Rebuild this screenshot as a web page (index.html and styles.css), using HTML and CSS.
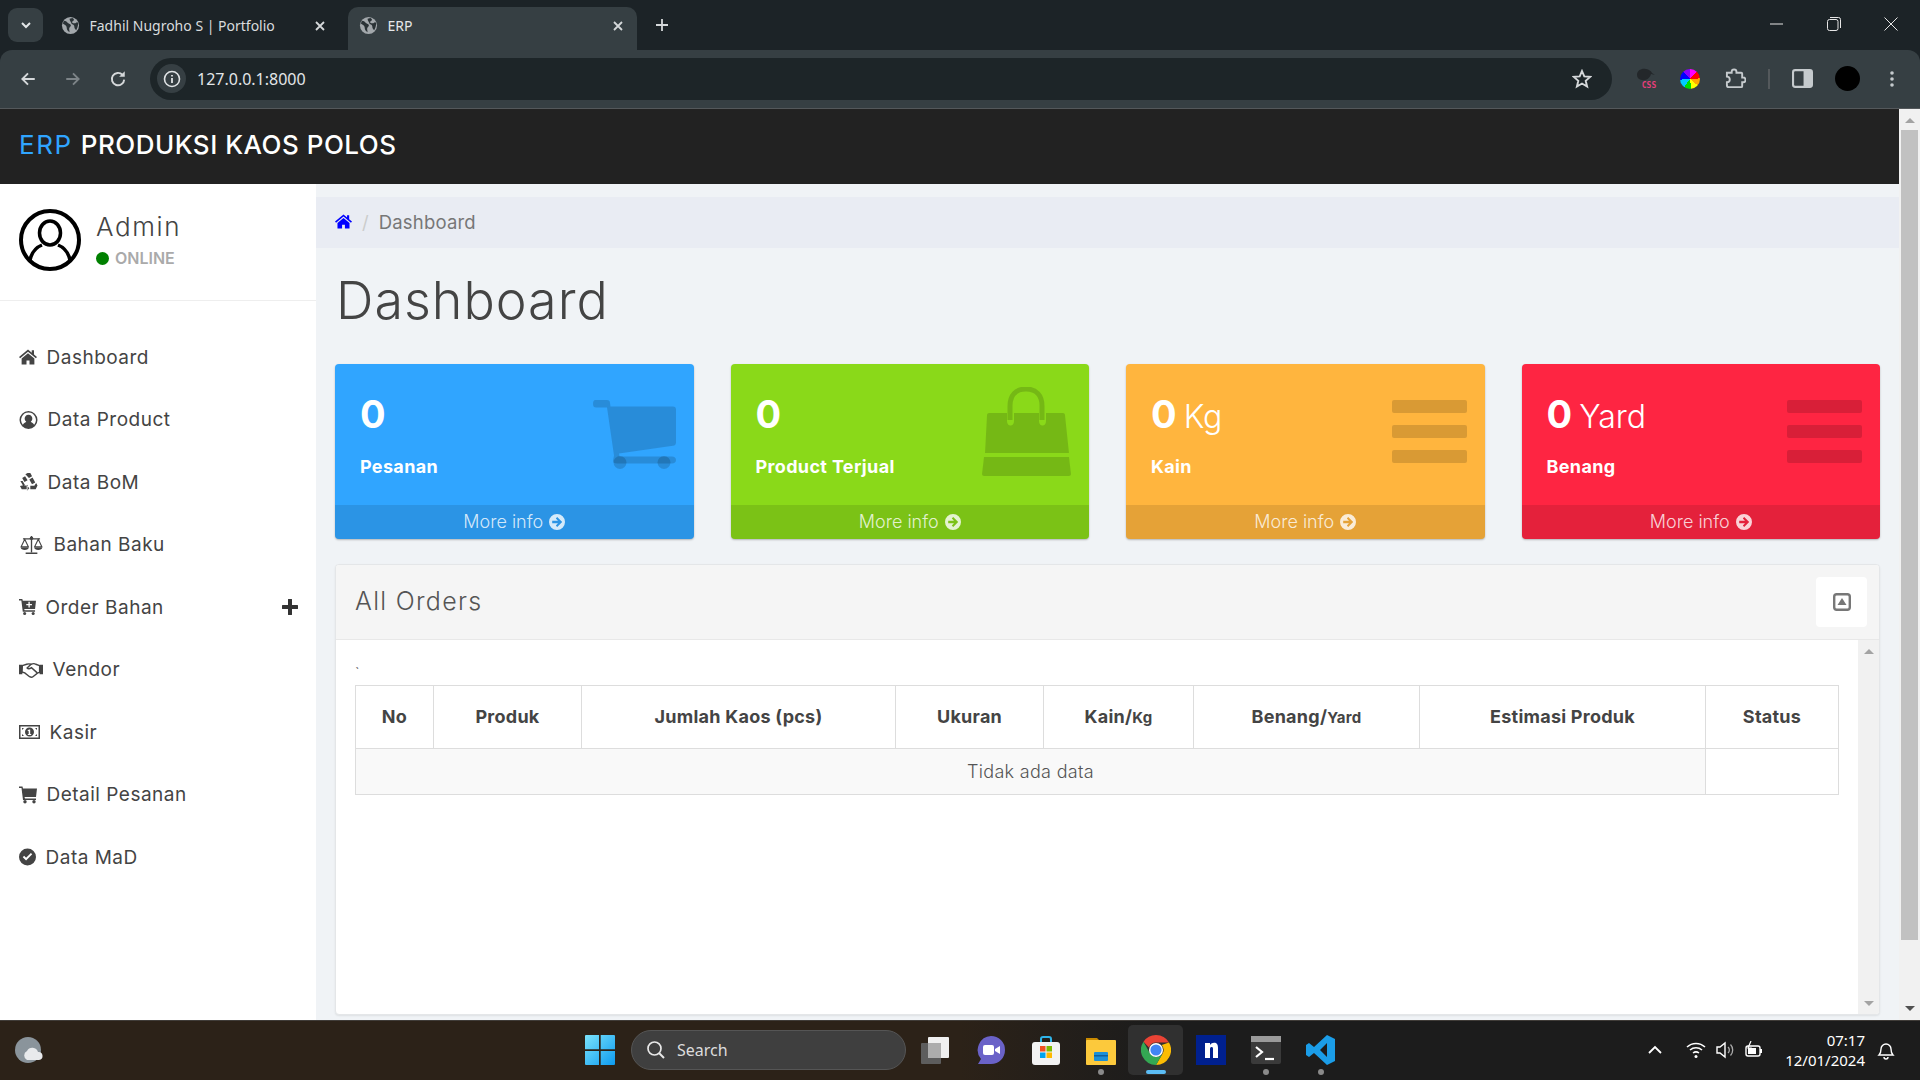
FILE: index.html
```html
<!DOCTYPE html>
<html lang="id">
<head>
<meta charset="utf-8">
<title>ERP</title>
<link rel="stylesheet" href="styles.css">
</head>
<body>
<svg class="defs" width="0" height="0" aria-hidden="true">
  <defs>
    <symbol id="globe" viewBox="0 0 20 20"><circle cx="10" cy="10" r="9" fill="#a3a8ac"/><path d="M3 5c2 0 3 1 4 2s2 1 3 2 0 2-1 3 0 3 0 5c-2-1-3-3-3-5S3 9 2 8zM12 2c2 1 2 2 1 3s-2 1-1 2 3 1 4 0 2 0 2 1c0 3-1 5-2 7-1-1-2-2-2-4s-3-2-3-3-2-3-2-5z" fill="#2a3236"/></symbol>
    <symbol id="arrow-circle" viewBox="0 0 16 16"><path fill-rule="evenodd" d="M8 0a8 8 0 1 1 0 16A8 8 0 0 1 8 0zM8.2 3 6.8 4.4 9 6.7H3.2v2.6H9l-2.2 2.3L8.2 13l5-5z"/></symbol>
    <symbol id="bars" viewBox="0 0 75 63"><rect width="75" height="13" rx="2"/><rect y="25" width="75" height="13" rx="2"/><rect y="50" width="75" height="13" rx="2"/></symbol>
  </defs>
</svg>

<header class="browser">
  <div class="tabstrip">
    <div class="tab-search"><svg width="14" height="14" viewBox="0 0 14 14"><path d="M3 5l4 4 4-4" fill="none" stroke="#e3e6e8" stroke-width="2"/></svg></div>
    <div class="tab tab-first">
      <svg class="favicon"><use href="#globe"/></svg>
      <span class="tab-title">Fadhil Nugroho S | Portfolio</span>
      <svg class="tab-x" viewBox="0 0 12 12"><path d="M2 2l8 8M10 2l-8 8" stroke="#d5d8da" stroke-width="1.8"/></svg>
    </div>
    <div class="tab tab-active">
      <svg class="favicon"><use href="#globe"/></svg>
      <span class="tab-title">ERP</span>
      <svg class="tab-x" viewBox="0 0 12 12"><path d="M2 2l8 8M10 2l-8 8" stroke="#d5d8da" stroke-width="1.8"/></svg>
    </div>
    <svg class="tab-new" viewBox="0 0 14 14"><path d="M7 1v12M1 7h12" stroke="#d5d8da" stroke-width="1.8"/></svg>
    <div class="win-controls">
      <svg viewBox="0 0 14 14"><path d="M0 7h13" stroke="#e6e6e6"/></svg>
      <svg viewBox="0 0 14 14"><rect x=".5" y="2.5" width="10.5" height="11" rx="2" fill="none" stroke="#e6e6e6"/><path d="M3 .5h8.5a2 2 0 0 1 2 2V11" fill="none" stroke="#e6e6e6"/></svg>
      <svg viewBox="0 0 14 14"><path d="M.5.5l13 13M13.5.5l-13 13" stroke="#e6e6e6"/></svg>
    </div>
  </div>
  <div class="toolbar">
    <svg class="nav" viewBox="0 0 16 16"><path d="M14 8H3M8 3L3 8l5 5" fill="none" stroke="#d5d8da" stroke-width="1.7"/></svg>
    <svg class="nav" viewBox="0 0 16 16"><path d="M2 8h11M8 3l5 5-5 5" fill="none" stroke="#7d8488" stroke-width="1.7"/></svg>
    <svg class="nav" viewBox="0 0 16 16"><path d="M13.5 8.5A5.5 5.5 0 1 1 12 4.3" fill="none" stroke="#d5d8da" stroke-width="1.7"/><path d="M14 1v5H9z" fill="#d5d8da"/></svg>
    <div class="address">
      <span class="site-info"><svg width="18" height="18" viewBox="0 0 18 18"><circle cx="9" cy="9" r="7.5" fill="none" stroke="#e0e3e5" stroke-width="1.6"/><path d="M9 8v5M9 5v1.6" stroke="#e0e3e5" stroke-width="1.8"/></svg></span>
      <span class="url">127.0.0.1:8000</span>
      <svg class="star" viewBox="0 0 20 20"><path d="M10 2l2.3 5.4 5.9.5-4.5 3.9 1.4 5.7-5.1-3-5.1 3 1.4-5.7L1.800 7.900l5.900-.5z" fill="none" stroke="#d5d8da" stroke-width="1.9"/></svg>
    </div>
    <div class="ext-group">
      <span class="ext-kiwi"><svg width="20" height="16" viewBox="0 0 20 16"><path d="M1 8c0-5 5-7 9-6 3 .5 5 2 6 4l3 2-4-1c-1 4-5 7-9 6-3-.5-5-2-5-5z" fill="#23272a"/></svg><span class="css-label">CSS</span></span>
      <span class="ext-wheel"></span>
      <svg class="ext-icon" viewBox="0 0 22 22"><path d="M2 5h5V4a2.500 2.500 0 0 1 5 0v1h5a1 1 0 0 1 1 1v4h1a2.500 2.500 0 0 1 0 5h-1v4a1 1 0 0 1-1 1H4a2 2 0 0 1-2-2v-3a3 3 0 0 0 0-6z" fill="none" stroke="#c5cacd" stroke-width="2"/></svg>
      <span class="ext-divider"></span>
      <svg class="ext-icon" viewBox="0 0 20 20"><rect x="1" y="2" width="18" height="16" rx="2" fill="none" stroke="#c5cacd" stroke-width="2"/><rect x="11" y="2" width="8" height="16" fill="#c5cacd"/></svg>
      <span class="avatar-dot"></span>
      <svg class="ext-menu" viewBox="0 0 4 16"><circle cx="2" cy="2" r="1.800"/><circle cx="2" cy="8" r="1.800"/><circle cx="2" cy="14" r="1.800"/></svg>
    </div>
  </div>
</header>

<div class="viewport">
  <div class="app">
    <div class="app-header"><span class="brand-erp">ERP</span> PRODUKSI KAOS POLOS</div>
    <div class="app-body">
      <aside class="sidebar">
        <div class="profile">
          <svg class="profile-pic" viewBox="0 0 62 62"><circle cx="31" cy="31" r="29" fill="#fff" stroke="#000" stroke-width="4"/><ellipse cx="31" cy="24" rx="10.500" ry="12" fill="none" stroke="#000" stroke-width="3.500"/><path d="M11 51c2-9 7-13 12-15M51 51c-2-9-7-13-12-15" fill="none" stroke="#000" stroke-width="3.500"/></svg>
          <div class="profile-text">
            <div class="profile-name">Admin</div>
            <div class="profile-status"><span class="status-dot"></span>ONLINE</div>
          </div>
        </div>
        <nav class="menu">
          <a class="menu-item"><svg class="mi mi-18" viewBox="0 0 24 20"><path d="M12 0 0 10l1.500 1.700L12 3l10.500 8.700L24 10l-4-3.300V1h-3v3.200zM12 5 3.500 12v8H10v-5.500h4V20h6.500v-8z"/></svg>Dashboard</a>
          <a class="menu-item"><svg class="mi mi-19" viewBox="0 0 20 20"><path fill-rule="evenodd" d="M10 0a10 10 0 1 1 0 20 10 10 0 0 1 0-20zm0 1.800a8.200 8.200 0 0 0-6.300 13.400C5 13.300 6.800 12.500 7.500 12a4.300 4.300 0 1 1 5 0c.7.500 2.500 1.300 3.800 3.200A8.200 8.200 0 0 0 10 1.800z"/></svg>Data Product</a>
          <a class="menu-item"><svg class="mi mi-19" viewBox="0 0 20 20"><path d="M6.500 1.500 9 0h3l2 3.500-3.500 2zM14.500 5l3 5.500-3.600 1.900-3-5.300zM6.200 3.500 9 8 5.500 10 3 5.500zM1 9l3.200 5.500L6 13.400 3.500 9zM.500 14.500 2.500 18H8v-4H3zM9 13v5l-1 2 3-3-3-3zM18.500 11l1.500 3-2 4h-6v-3.800h4.500z"/></svg>Data BoM</a>
          <a class="menu-item"><svg class="mi mi-25" viewBox="0 0 25 20"><path d="M12.500 0v18M6 19.200h13M3 3.200h19" fill="none" stroke="currentColor" stroke-width="1.500"/><circle cx="12.500" cy="2.500" r="2"/><path d="M5 3.500 1 12h8zM20 3.500 16 12h8z" fill="none" stroke="currentColor" stroke-width="1.200"/><path d="M.500 12.500h9c0 2-2 3-4.500 3s-4.500-1-4.500-3zM15.500 12.500h9c0 2-2 3-4.500 3s-4.500-1-4.500-3z"/></svg>Bahan Baku</a>
          <a class="menu-item menu-item-sub"><svg class="mi mi-17" viewBox="0 0 18 17"><path fill-rule="evenodd" d="M0 0h3.500l.5 2h14l-1 8.500H5.500L6 12h11v1.500H4L2.500 1.500H0zM10 3v2.300H7.700v1.400H10V9h1.400V6.700h2.300V5.300h-2.300V3z"/><circle cx="6" cy="15.300" r="1.600"/><circle cx="15" cy="15.300" r="1.600"/></svg>Order Bahan<svg class="menu-plus" viewBox="0 0 16 16"><path d="M8 1v14M1 8h14" stroke="currentColor" stroke-width="4" stroke-linecap="round"/></svg></a>
          <a class="menu-item"><svg class="mi mi-24" viewBox="0 0 25 16"><path d="M0 2.500h3.500v10H0zM21.500 2.500H25v10h-3.500z"/><path d="M3.500 3.500 8 2c2-.7 3-.5 4.500 0 2-.8 3.500-1 5 0l4 1.500v7l-2 .5-5 4c-1 .8-2.500.5-3.500 0l-5-4-3-1z" fill="none" stroke="currentColor" stroke-width="1.500"/><path d="M12.500 2 8.500 6c1.500 1.500 3 .5 4.500-.5l6 5.500" fill="none" stroke="currentColor" stroke-width="1.500"/></svg>Vendor</a>
          <a class="menu-item"><svg class="mi mi-21" viewBox="0 0 21 14"><path fill-rule="evenodd" d="M0 0h21v14H0zm1.500 1.500v11h18v-11zM3 3h2L3 5zM18 3v2l-2-2zM3 11V9l2 2zM16 11l2-2v2z"/><path fill-rule="evenodd" d="M10.500 2.500a4.500 4.500 0 1 1 0 9 4.500 4.500 0 0 1 0-9zM10 4.500 8.500 5.500l.5.800.7-.4V9H8.800v1h3.400V9h-1V4.500z"/></svg>Kasir</a>
          <a class="menu-item"><svg class="mi mi-18" viewBox="0 0 18 17"><path d="M0 0h3.500l.5 2h14l-1 8.500H5.500L6 12h11v1.500H4L2.500 1.500H0z"/><circle cx="6" cy="15.300" r="1.700"/><circle cx="15" cy="15.300" r="1.700"/></svg>Detail Pesanan</a>
          <a class="menu-item"><svg class="mi mi-17" viewBox="0 0 18 18"><path fill-rule="evenodd" d="M9 0a9 9 0 1 1 0 18A9 9 0 0 1 9 0zm5 6.200L12.600 4.800 7.500 9.900 5.400 7.800 4 9.200l3.500 3.500z"/></svg>Data MaD</a>
        </nav>
      </aside>

      <main class="content">
        <div class="breadcrumb">
          <svg class="crumb-home" viewBox="0 0 24 20"><path d="M12 0 0 10l1.500 1.700L12 3l10.500 8.700L24 10l-4-3.300V1h-3v3.200zM12 5 3.500 12v8H10v-5.500h4V20h6.500v-8z"/></svg>
          <span class="crumb-sep">/</span>
          <span class="crumb-current">Dashboard</span>
        </div>
        <div class="page">
          <h1 class="page-title">Dashboard</h1>
          <section class="cards">
            <article class="card card-blue">
              <div class="card-body">
                <div class="card-text">
                  <div class="card-num">0</div>
                  <div class="card-label">Pesanan</div>
                </div>
                <svg class="card-icon icon-cart" viewBox="0 0 83 69"><path d="M2 0h12c2 0 3 1 3 3l.5 3.500H80c2 0 3 1 3 3v33c0 2-1 3-3 3.300l-54 7.700.5 3H79c2.500 0 4 1.500 4 3.500s-1.500 3.500-4 3.500H24c-3 0-4-1-4-3l1-5-7-48H3c-2 0-3-1-3-3.500C0 1 1 0 2 0z"/><ellipse cx="27" cy="62.500" rx="6.500" ry="6.500"/><ellipse cx="71" cy="62.500" rx="6.500" ry="6.500"/></svg>
              </div>
              <a class="card-foot">More info <svg class="foot-icon"><use href="#arrow-circle"/></svg></a>
            </article>
            <article class="card card-green">
              <div class="card-body">
                <div class="card-text">
                  <div class="card-num">0</div>
                  <div class="card-label">Product Terjual</div>
                </div>
                <svg class="card-icon icon-bag" viewBox="0 0 89 89"><path d="M7 26h18v8c0 6 7 6 7 0v-8h25v8c0 6 7 6 7 0v-8h17c1 0 2 .8 2 2l4 38H3L5 28c0-1.200 1-2 2-2z"/><path d="M2 70h85l2 17c0 1-1 2-2 2H2c-1 0-2-1-2-2z"/><path d="M28 33V19C28 8 34 2 44 2s16 6 16 17v14" fill="none" stroke="currentColor" stroke-width="5"/></svg>
              </div>
              <a class="card-foot">More info <svg class="foot-icon"><use href="#arrow-circle"/></svg></a>
            </article>
            <article class="card card-orange">
              <div class="card-body">
                <div class="card-text">
                  <div class="card-num">0 <span class="card-unit">Kg</span></div>
                  <div class="card-label">Kain</div>
                </div>
                <svg class="card-icon icon-bars"><use href="#bars"/></svg>
              </div>
              <a class="card-foot">More info <svg class="foot-icon"><use href="#arrow-circle"/></svg></a>
            </article>
            <article class="card card-red">
              <div class="card-body">
                <div class="card-text">
                  <div class="card-num">0 <span class="card-unit">Yard</span></div>
                  <div class="card-label">Benang</div>
                </div>
                <svg class="card-icon icon-bars"><use href="#bars"/></svg>
              </div>
              <a class="card-foot">More info <svg class="foot-icon"><use href="#arrow-circle"/></svg></a>
            </article>
          </section>

          <section class="panel">
            <div class="panel-head">
              <span class="panel-title">All Orders</span>
              <button class="panel-btn"><svg width="18" height="18" viewBox="0 0 18 18"><rect x="1.200" y="1.200" width="15.600" height="15.600" rx="2.500" fill="none" stroke="#777" stroke-width="2.400"/><path d="M9 5l4.500 7h-9z" fill="#777"/></svg></button>
            </div>
            <div class="panel-main">
              <div class="panel-inner">
                <div class="tick">`</div>
                <table class="orders">
                  <colgroup>
                    <col class="c1"><col class="c2"><col class="c3"><col class="c4"><col class="c5"><col class="c6"><col class="c7"><col class="c8">
                  </colgroup>
                  <thead>
                    <tr>
                      <th>No</th><th>Produk</th><th>Jumlah Kaos (pcs)</th><th>Ukuran</th>
                      <th>Kain/<small>Kg</small></th><th>Benang/<small>Yard</small></th><th>Estimasi Produk</th><th>Status</th>
                    </tr>
                  </thead>
                  <tbody>
                    <tr><td colspan="7" class="empty">Tidak ada data</td><td class="blank"></td></tr>
                  </tbody>
                </table>
              </div>
              <div class="scrollbar scrollbar-inner">
                <span class="sb-up"></span>
                <span class="sb-down"></span>
              </div>
            </div>
          </section>
        </div>
      </main>
    </div>
  </div>
  <div class="scrollbar scrollbar-main">
    <span class="sb-up"></span>
    <span class="sb-thumb"></span>
    <span class="sb-down sb-dark"></span>
  </div>
</div>

<footer class="taskbar">
  <div class="tb-left">
    <svg width="30" height="28" viewBox="0 0 30 28"><circle cx="14" cy="14" r="13" fill="#8a949b"/><path d="M13 24a5 5 0 0 1 0-9 6 6 0 0 1 11 1 4 4 0 0 1 1 8z" fill="#e8eaec"/></svg>
  </div>
  <div class="tb-center">
    <svg class="win-logo" viewBox="0 0 30 30"><defs><linearGradient id="wg" x1="0" y1="0" x2="1" y2="1"><stop offset="0" stop-color="#7be3fb"/><stop offset="1" stop-color="#0d9bf0"/></linearGradient></defs><path fill="url(#wg)" d="M0 1a1 1 0 0 1 1-1h13v14.300H0zM15.700 0H29a1 1 0 0 1 1 1v13.300H15.700zM0 16h14v14H1a1 1 0 0 1-1-1zM15.700 16H30v13a1 1 0 0 1-1 1H15.700z"/></svg>
    <div class="tb-search">
      <svg width="20" height="20" viewBox="0 0 20 20"><circle cx="8.500" cy="8.500" r="6.500" fill="none" stroke="#e8e8e8" stroke-width="1.700"/><path d="M13 13l5 5" stroke="#e8e8e8" stroke-width="2"/></svg>
      <span>Search</span>
    </div>
    <div class="tb-apps">
      <span class="app-cell"><svg class="app-svg" viewBox="0 0 30 30"><rect x="0" y="8" width="20" height="21" rx="1" fill="#5d5d5d"/><rect x="7" y="2" width="21" height="21" rx="1" fill="#f0f0f0"/><rect x="7" y="8" width="13" height="15" fill="#adadad"/></svg></span>
      <span class="app-cell"><svg class="app-svg" viewBox="0 0 30 30"><path d="M15 1a14 14 0 0 1 14 14c0 8-6 14-14 14H2l3-5a14 14 0 0 1 10-23z" fill="#6a62c8"/><rect x="7" y="10" width="11" height="10" rx="2" fill="#fff"/><path d="M19 14l5-3v8l-5-3z" fill="#fff"/></svg></span>
      <span class="app-cell"><svg class="app-svg" viewBox="0 0 30 30"><path d="M10 7V4a2 2 0 0 1 2-2h6a2 2 0 0 1 2 2v3" fill="none" stroke="#2fb4e9" stroke-width="2"/><rect x="1" y="7" width="28" height="23" rx="3" fill="#f2f2f2"/><rect x="9" y="11" width="5.500" height="5.500" fill="#f25022"/><rect x="15.500" y="11" width="5.500" height="5.500" fill="#7fba00"/><rect x="9" y="17.500" width="5.500" height="5.500" fill="#00a4ef"/><rect x="15.500" y="17.500" width="5.500" height="5.500" fill="#ffb900"/></svg></span>
      <span class="app-cell app-dot"><svg class="app-svg" viewBox="0 0 30 30"><path d="M0 3h11l3 3h-14z" fill="#c98a00"/><rect y="5" width="30" height="25" rx="1" fill="#fcc93c"/><rect x="8" y="17" width="14" height="9" rx="1" fill="#1a8fd8"/><rect x="8" y="20" width="14" height="1.500" fill="#0d5f9e"/></svg></span>
      <span class="app-cell app-active"><svg class="app-svg" viewBox="0 0 30 30"><path d="M15 0a15 15 0 0 1 13 7.500H15a7.500 7.500 0 0 0-7 5L2.500 6.700A15 15 0 0 1 15 0z" fill="#e94335"/><path d="M28 7.500A15 15 0 0 1 15 30l6.500-11.200A7.500 7.500 0 0 0 20.700 10z" fill="#fbbc04"/><path d="M2.500 6.700 9 18.500a7.500 7.500 0 0 0 12.500.3L15 30A15 15 0 0 1 2.500 6.700z" fill="#34a853"/><circle cx="15" cy="15" r="7" fill="#fff"/><circle cx="15" cy="15" r="5.600" fill="#4285f4"/></svg></span>
      <span class="app-cell"><svg class="app-svg" viewBox="0 0 30 30"><rect width="30" height="30" fill="#00208f"/><path d="M9 8h5v2c1-1.500 2.500-2.300 4-2.300 3 0 4 2 4 5V23h-5v-9c0-1.500-.5-2-1.500-2s-1.500.7-1.500 2v9H9z" fill="#fff"/></svg></span>
      <span class="app-cell app-dot"><svg class="app-svg" viewBox="0 0 30 30"><rect y="1" width="30" height="28" rx="2" fill="#3a3a3a"/><rect y="1" width="30" height="6" fill="#9a9a9a"/><path d="M5 12l6 5-6 5" fill="none" stroke="#fff" stroke-width="2.200"/><path d="M14 24h9" stroke="#fff" stroke-width="2.200"/></svg></span>
      <span class="app-cell app-dot"><svg class="app-svg" viewBox="0 0 30 30"><path d="M21 0l8 4v22l-8 4L8 18l-5 4-3-2v-10l3-2 5 4zM21 8l-7 7 7 7z" fill="#1b9de8"/></svg></span>
    </div>
  </div>
  <div class="tb-tray">
    <svg class="tray-caret" viewBox="0 0 14 10"><path d="M1 8l6-6 6 6" fill="none" stroke="#fff" stroke-width="1.800"/></svg>
    <svg class="tray-icon" viewBox="0 0 20 18"><path d="M1 6a13 13 0 0 1 18 0M4 9a9 9 0 0 1 12 0M7 12a5 5 0 0 1 6 0" fill="none" stroke="#fff" stroke-width="1.500"/><circle cx="10" cy="15.500" r="1.500" fill="#fff"/></svg>
    <svg class="tray-icon" viewBox="0 0 20 18"><path d="M2 6h3l5-4v14l-5-4H2z" fill="none" stroke="#fff" stroke-width="1.400"/><path d="M13 6a4 4 0 0 1 0 6M15.500 3.500a8 8 0 0 1 0 11" fill="none" stroke="#aaa" stroke-width="1.300"/></svg>
    <svg class="tray-icon" viewBox="0 0 20 18"><rect x="2" y="5" width="14" height="10" rx="2" fill="none" stroke="#fff" stroke-width="1.400"/><rect x="4" y="7" width="8" height="6" fill="#fff"/><path d="M17 8v4" stroke="#fff" stroke-width="2"/><path d="M7 0 4 7h3l-1 4" fill="none" stroke="#fff" stroke-width="1.200"/></svg>
    <div class="clock"><span>07:17</span><span>12/01/2024</span></div>
    <svg class="tray-bell" viewBox="0 0 18 20"><path d="M2 15c1.500-1.500 2-3 2-6a5 5 0 0 1 10 0c0 3 .5 4.500 2 6z" fill="none" stroke="#fff" stroke-width="1.400"/><path d="M7 17a2 2 0 0 0 4 0" fill="none" stroke="#fff" stroke-width="1.400"/></svg>
  </div>
</footer>
</body>
</html>
```

FILE: styles.css
```css
* { box-sizing: border-box; }
html, body { margin: 0; padding: 0; height: 100%; }
body {
  width: 1920px;
  height: 1080px;
  overflow: hidden;
  display: flex;
  flex-direction: column;
  font-family: Inter, "Noto Sans", sans-serif;
  color: #444;
  background: #f0f3f6;
}
.defs { position: absolute; }

/* Browser chrome */
.browser { flex: 0 0 109px; background: #1c2327; font-family: "Noto Sans", sans-serif; }
.tabstrip { height: 50px; display: flex; align-items: flex-end; padding-left: 8px; }
.tab-search {
  width: 35px; height: 34px; margin-bottom: 8px; border-radius: 9px; background: #363f43;
  display: flex; align-items: center; justify-content: center;
}
.tab { width: 289px; height: 43px; border-radius: 10px 10px 0 0; display: flex; align-items: center; padding: 0 11px 6px 11px; color: #d9dcde; font-size: 14px; }
.tab-first { margin-left: 6.5px; }
.tab-active { margin-left: 9px; background: #363f43; color: #e6e8ea; }
.favicon { width: 19px; height: 19px; margin-right: 10px; flex: none; }
.tab-title { flex: 1; white-space: nowrap; overflow: hidden; }
.tab-x { width: 12px; height: 12px; margin-right: 2px; }
.tab-new { width: 14px; height: 14px; margin: 0 0 18px 18px; }
.win-controls { margin-left: auto; height: 50px; display: flex; align-items: flex-start; gap: 43px; padding: 17px 22px 0 0; }
.win-controls svg { width: 14px; height: 14px; }
.toolbar {
  height: 59px; background: #363f43; border-radius: 12px 12px 0 0; border-bottom: 1px solid #54585b;
  display: flex; align-items: center; padding: 0 0 1px 19px;
}
.nav { width: 18px; height: 18px; margin-right: 27px; flex: none; }
.address {
  width: 1462px; height: 42px; margin-left: -4px; border-radius: 21px; background: #1d2528;
  display: flex; align-items: center; padding: 0 20px 0 7px;
}
.site-info { width: 29px; height: 29px; border-radius: 50%; background: #363f43; display: flex; align-items: center; justify-content: center; }
.url { margin-left: 11px; color: #e3e6e8; font-size: 16px; flex: 1; }
.star { width: 20px; height: 20px; }
.ext-group { flex: 1; display: flex; align-items: center; padding-left: 23px; }
.ext-kiwi { width: 22px; height: 24px; display: flex; flex-direction: column; align-items: center; margin-right: 23px; }
.css-label { font: bold 8px/8px "DejaVu Sans Mono", monospace; color: #e83e7b; margin-top: -1px; margin-left: 6px; }
.ext-wheel { width: 20px; height: 20px; border-radius: 50%; margin-right: 25px; background: conic-gradient(#f0f 0 12%, #f00 12% 24%, #fa0 24% 36%, #ff0 36% 48%, #0d0 48% 60%, #0cf 60% 74%, #00f 74% 88%, #80f 88%); }
.ext-icon { width: 21px; height: 21px; flex: none; }
.ext-divider { width: 2px; height: 20px; background: #54595c; margin: 0 22px; }
.avatar-dot { width: 25px; height: 25px; background: #000; border-radius: 50%; margin-left: 22px; }
.ext-menu { width: 4px; height: 16px; fill: #c5cacd; margin-left: 30px; }

/* Viewport */
.viewport { flex: 1; min-height: 0; display: flex; }
.app { flex: 1; min-width: 0; display: flex; flex-direction: column; }
.app-header {
  flex: 0 0 75px; background: #222; color: #fff; font-size: 26px; font-weight: 500;
  display: flex; align-items: center; padding: 0 0 4px 19px; gap: 8px; letter-spacing: .5px;
}
.brand-erp { color: #30a5ff; font-weight: 400; letter-spacing: 1.6px; }
.app-body { flex: 1; min-height: 0; display: flex; }

/* Sidebar */
.sidebar { flex: 0 0 316px; background: #fff; }
.profile { height: 117px; border-bottom: 1px solid #eee; display: flex; padding: 25px 0 0 19px; }
.profile-pic { width: 62px; height: 62px; flex: none; }
.profile-text { margin-left: 15px; padding-top: 2px; }
.profile-name { font-size: 26px; line-height: 32px; font-weight: 300; color: #444; letter-spacing: 1.6px; }
.profile-status { display: flex; align-items: center; font-size: 16px; font-weight: 600; color: #aaa; margin-top: 5px; }
.status-dot { width: 13px; height: 13px; border-radius: 50%; background: green; margin-right: 6px; }
.menu { padding-top: 26px; }
.menu-item { height: 62.5px; display: flex; align-items: center; gap: 9.5px; padding-left: 19px; font-size: 19px; color: #444; letter-spacing: .5px; padding-bottom: 2px; }
.mi { flex: none; height: 18px; fill: #444; color: #444; }
.mi-17 { width: 17px; }
.mi-18 { width: 18px; }
.mi-19 { width: 19px; }
.mi-21 { width: 21px; }
.mi-24 { width: 24px; }
.mi-25 { width: 25px; }
.menu-plus { width: 16px; height: 16px; margin-left: auto; margin-right: 18px; color: #333; }

/* Content */
.content { flex: 1; min-width: 0; padding-top: 13px; display: flex; flex-direction: column; }
.breadcrumb { height: 51px; flex: none; background: #e9ecf3; display: flex; align-items: center; padding: 0 0 2px 19px; font-size: 18.5px; color: #777; }
.crumb-home { width: 17px; height: 15px; fill: #00f; }
.crumb-sep { margin: 0 10px 0 10px; color: #ccc; }
.crumb-current { letter-spacing: .2px; }
.page { flex: 1; min-height: 0; padding: 0 19px 5px; display: flex; flex-direction: column; }
.page-title { margin: 20px 0 0 1px; font-size: 52px; line-height: 65px; font-weight: 300; color: #444; letter-spacing: 1px; height: 96px; }

/* Cards */
.cards { display: grid; grid-template-columns: repeat(4, 1fr); column-gap: 37px; flex: none; }
.card { height: 175px; border-radius: 4px; overflow: hidden; display: flex; flex-direction: column; color: #fff; box-shadow: 0 1px 2px rgba(0,0,0,.25); }
.card-blue { background: #30a5ff; }
.card-green { background: #8ad919; }
.card-orange { background: #ffb53e; }
.card-red { background: #fe2542; }
.card-body { flex: 1; display: flex; justify-content: space-between; padding: 0 18px 0 25px; }
.card-num { font-size: 38px; line-height: 44px; font-weight: 700; margin-top: 28px; height: 44px; white-space: nowrap; word-spacing: -2px; }
.card-unit { font-size: 32px; font-weight: 300; margin-left: 0; }
.card-label { font-size: 18px; font-weight: 700; line-height: 24px; margin-top: 19px; letter-spacing: .35px; }
.card-icon { fill: rgba(0,0,0,.15); color: rgba(0,0,0,.15); flex: none; }
.icon-cart { width: 83px; height: 69px; margin-top: 36px; }
.icon-bag { width: 89px; height: 89px; margin-top: 23px; }
.icon-bars { width: 75px; height: 63px; margin-top: 36px; }
.card-foot {
  height: 34px; flex: none; background: rgba(0,0,0,.1); color: rgba(255,255,255,.8);
  display: flex; align-items: center; justify-content: center; gap: 6px; font-size: 18px; font-weight: 300; padding-bottom: 1px;
}
.foot-icon { width: 16px; height: 16px; fill: rgba(255,255,255,.8); }

/* Panel */
.panel { flex: 1; min-height: 0; margin-top: 25px; display: flex; flex-direction: column; background: #fff; border: 1px solid #e4e6e8; border-radius: 4px; box-shadow: 0 1px 2px rgba(0,0,0,.08); overflow: hidden; }
.panel-head { flex: 0 0 75px; background: #f5f5f5; border-bottom: 1px solid #e8e8e8; display: flex; align-items: center; justify-content: space-between; padding-right: 12px; }
.panel-title { margin-left: 19px; font-size: 25px; font-weight: 300; color: #555; letter-spacing: 1.3px; padding-bottom: 2px; }
.panel-btn { width: 51px; height: 50px; background: #fff; border: 0; border-radius: 4px; display: flex; align-items: center; justify-content: center; padding: 0; }
.panel-main { flex: 1; min-height: 0; display: flex; }
.panel-inner { flex: 1; min-width: 0; padding: 16px 19px 0; }
.tick { height: 29px; font-size: 14px; line-height: 34px; color: #777; }
.orders { width: 1483px; table-layout: fixed; border-collapse: collapse; font-size: 18px; color: #444; }
.c1 { width: 78px; } .c2 { width: 148px; } .c3 { width: 314px; } .c4 { width: 148px; }
.c5 { width: 150px; } .c6 { width: 226px; } .c7 { width: 286px; } .c8 { width: 133px; }
.orders th, .orders td { border: 1px solid #ddd; text-align: center; padding: 0; }
.orders th { height: 63px; font-weight: 700; letter-spacing: .25px; padding-bottom: 1px; }
.orders th small { font-size: 15px; font-weight: 700; }
.orders td { height: 46px; font-weight: 300; color: #555; letter-spacing: .3px; }
.empty { background: #f9f9f9; }
.blank { background: #fff; }

/* Scrollbars */
.scrollbar { flex: 0 0 21px; background: #f1f1f1; display: flex; flex-direction: column; align-items: center; }
.scrollbar-main { padding-bottom: 0; }
.sb-up, .sb-down { width: 0; height: 0; border-left: 5px solid transparent; border-right: 5px solid transparent; flex: none; }
.sb-up { border-bottom: 5px solid #a3a3a3; margin-top: 9px; }
.sb-down { border-top: 5px solid #a3a3a3; margin-top: auto; margin-bottom: 8px; }
.sb-dark { border-top-color: #505050; margin-top: 0; margin-bottom: auto; }
.sb-thumb { width: 17px; height: 810px; background: #c1c1c1; margin: 7px 0 66px; flex: none; }

/* Taskbar */
.taskbar { flex: 0 0 60px; background: linear-gradient(90deg, #2c2218 0, #2c2218 50%, #1c1c1c 60%); border-top: 1px solid #403c38; display: flex; align-items: center; padding-bottom: 2px; color: #fff; font-family: "Noto Sans", sans-serif; }
.tb-left { width: 585px; padding-left: 14px; display: flex; align-items: center; }
.tb-center { display: flex; align-items: center; }
.win-logo { width: 30px; height: 30px; flex: none; }
.tb-search { width: 275px; height: 40px; margin-left: 16px; border-radius: 20px; background: #3f3f3f; border: 1px solid #555; display: flex; align-items: center; gap: 11px; padding-left: 14px; font-size: 16px; color: #dcdcdc; }
.tb-apps { display: flex; margin-left: 2px; }
.app-cell { width: 55px; height: 50px; display: flex; align-items: center; justify-content: center; position: relative; }
.app-svg { width: 30px; height: 30px; }
.app-dot::after { content: ""; position: absolute; bottom: 0; left: 50%; width: 6px; height: 6px; margin-left: -3px; border-radius: 50%; background: #8a8a8a; }
.app-active { background: #303030; border-radius: 5px; }
.app-active::after { content: ""; position: absolute; bottom: 1px; left: 50%; width: 20px; height: 4px; margin-left: -10px; border-radius: 2px; background: #5bbdf5; }
.tb-tray { margin-left: auto; display: flex; align-items: center; padding-right: 25px; }
.tray-caret { width: 14px; height: 10px; margin-right: 24px; }
.tray-icon { width: 20px; height: 18px; margin-right: 9px; }
.clock { display: flex; flex-direction: column; align-items: flex-end; font-size: 15px; line-height: 20px; margin-left: 12px; }
.tray-bell { width: 18px; height: 20px; margin-left: 12px; }
```
